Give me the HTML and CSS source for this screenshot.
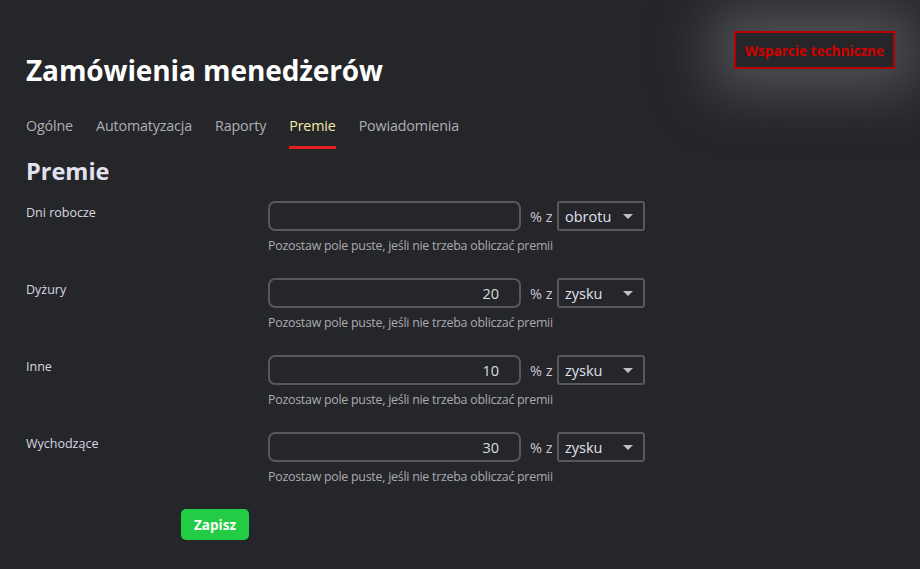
FILE: index.html
```html
<!DOCTYPE html>
<html lang="pl">
<head>
<meta charset="utf-8">
<link rel="stylesheet" href="styles.css">
</head>
<body>
<div class="page">
  <header class="top">
    <h1 class="title">Zamówienia menedżerów</h1>
    <button class="support">Wsparcie techniczne</button>
  </header>
  <nav class="tabs">
    <a class="tab">Ogólne</a>
    <a class="tab">Automatyzacja</a>
    <a class="tab">Raporty</a>
    <a class="tab active">Premie</a>
    <a class="tab">Powiadomienia</a>
  </nav>
  <h2 class="section">Premie</h2>
  <form class="form">
    <div class="row">
      <label class="label">Dni robocze</label>
      <div class="field">
        <div class="controls">
          <input class="input" type="text" value="">
          <span class="pct">% z</span>
          <div class="select"><span>obrotu</span><span class="arrow"></span></div>
        </div>
        <div class="hint">Pozostaw pole puste, jeśli nie trzeba obliczać premii</div>
      </div>
    </div>
    <div class="row">
      <label class="label">Dyżury</label>
      <div class="field">
        <div class="controls">
          <input class="input" type="text" value="20">
          <span class="pct">% z</span>
          <div class="select"><span>zysku</span><span class="arrow"></span></div>
        </div>
        <div class="hint">Pozostaw pole puste, jeśli nie trzeba obliczać premii</div>
      </div>
    </div>
    <div class="row">
      <label class="label">Inne</label>
      <div class="field">
        <div class="controls">
          <input class="input" type="text" value="10">
          <span class="pct">% z</span>
          <div class="select"><span>zysku</span><span class="arrow"></span></div>
        </div>
        <div class="hint">Pozostaw pole puste, jeśli nie trzeba obliczać premii</div>
      </div>
    </div>
    <div class="row">
      <label class="label">Wychodzące</label>
      <div class="field">
        <div class="controls">
          <input class="input" type="text" value="30">
          <span class="pct">% z</span>
          <div class="select"><span>zysku</span><span class="arrow"></span></div>
        </div>
        <div class="hint">Pozostaw pole puste, jeśli nie trzeba obliczać premii</div>
      </div>
    </div>
    <div class="actions">
      <button class="save" type="button">Zapisz</button>
    </div>
  </form>
</div>
</body>
</html>
```

FILE: styles.css
```css
* { box-sizing: border-box; }
html, body {
  margin: 0;
  padding: 0;
  background: #252629;
  height: 100%;
  overflow: hidden;
}
body {
  font-family: "Open Sans", "Noto Sans", sans-serif;
  color: #dcdce4;
}
.page {
  padding: 31px 25px 0 26px;
}
.top {
  display: flex;
  justify-content: space-between;
  align-items: flex-start;
}
.title {
  margin: 20px 0 0 0;
  font-size: 28px;
  font-weight: 700;
  color: #ffffff;
  line-height: 38px;
  letter-spacing: -0.1px;
}
.support {
  width: 161px;
  height: 38px;
  background: #252629;
  border: 2px solid #b80000;
  color: #d10000;
  font-family: "Open Sans", sans-serif;
  font-weight: 700;
  font-size: 13.8px;
  letter-spacing: -0.1px;
  padding: 0;
  box-shadow: 0 0 55px 22px rgba(125,125,130,0.5);
}
.tabs {
  display: flex;
  gap: 23px;
  margin-top: 27px;
}
.tab {
  font-size: 14.3px;
  color: #aeaeb8;
  padding-bottom: 10px;
  border-bottom: 3px solid transparent;
  line-height: 20px;
  letter-spacing: -0.15px;
}
.tab.active {
  color: #f2e9a6;
  border-bottom-color: #e41e1e;
}
.section {
  margin: 6px 0 0 0;
  font-size: 23.5px;
  font-weight: 700;
  color: #e2e2f2;
  line-height: 32px;
}
.form {
  margin-top: 14px;
}
.row {
  display: flex;
  height: 77px;
}
.label {
  width: 242px;
  font-size: 12.5px;
  color: #d8d8e0;
  padding-top: 3px;
  line-height: 18px;
}
.controls {
  display: flex;
  align-items: center;
  height: 30px;
}
.input {
  width: 253px;
  height: 30px;
  border: 2px solid #57585c;
  border-radius: 7px;
  background: #252629;
  color: #dcdce0;
  font-family: "Open Sans", sans-serif;
  font-size: 14.5px;
  text-align: right;
  padding: 0 20px 0 10px;
  outline: none;
}
.pct {
  margin-left: 9px;
  font-size: 14.5px;
  color: #c8c8d8;
  width: 27px;
}
.select {
  width: 88px;
  height: 30px;
  border: 2px solid #57585c;
  border-radius: 3px;
  display: flex;
  align-items: center;
  justify-content: space-between;
  padding: 0 10px 0 6px;
  font-size: 14.5px;
  color: #e0e0ee;
}
.arrow {
  width: 0;
  height: 0;
  border-left: 5px solid transparent;
  border-right: 5px solid transparent;
  border-top: 5px solid #c0c0c8;
}
.hint {
  margin-top: 7px;
  font-size: 12.4px;
  color: #aaaab2;
  line-height: 16px;
  letter-spacing: -0.25px;
}
.actions {
  padding-left: 155px;
}
.save {
  width: 68px;
  height: 31px;
  border: none;
  border-radius: 5px;
  background: #22cc44;
  color: #ffffff;
  font-family: "Open Sans", sans-serif;
  font-weight: 700;
  font-size: 13.5px;
  padding: 0;
}
```
